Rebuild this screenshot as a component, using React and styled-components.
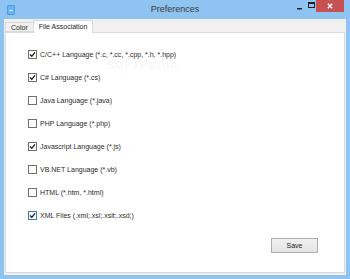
import React from 'react'
import styled, { createGlobalStyle } from 'styled-components'

const GlobalStyle = createGlobalStyle`
  html, body {
    margin: 0;
    padding: 0;
    overflow: hidden;
    background: #8fc4f2;
  }
`

const Window = styled.div`
  width: 350px;
  height: 279px;
  background: #8fc4f2;
  display: flex;
  flex-direction: column;
  font-family: 'Liberation Sans', Arial, sans-serif;
  color: #2b2b2b;
  box-sizing: border-box;
`

const TitleBar = styled.div`
  height: 19px;
  display: flex;
  align-items: flex-start;
  position: relative;
  flex-shrink: 0;
`

const AppIcon = styled.svg`
  margin: 5px 0 0 7px;
`

const Title = styled.div`
  position: absolute;
  left: 0;
  right: 0;
  top: 4px;
  text-align: center;
  font-size: 9px;
  color: #3a3a3a;
`

const Controls = styled.div`
  margin-left: auto;
  margin-right: 6px;
  display: flex;
  align-items: flex-start;
  position: relative;
  z-index: 1;
`

const CtrlButton = styled.div`
  width: ${p => p.$w}px;
  height: 12px;
  display: flex;
  align-items: center;
  justify-content: center;
  background: ${p => (p.$close ? '#c75050' : 'transparent')};
`

const Client = styled.div`
  flex: 1;
  margin: 0 4px 4px 4px;
  background: #f0f0f0;
  display: flex;
  flex-direction: column;
  padding: 1px 1px 2px 1px;
`

const TabRow = styled.div`
  display: flex;
  align-items: flex-end;
  height: 12px;
  position: relative;
  z-index: 1;
`

const Tab = styled.div`
  font-size: 7px;
  box-sizing: border-box;
  border: 1px solid #d9d9d9;
  border-bottom: ${p => (p.$active ? 'none' : '1px solid #d9d9d9')};
  background: ${p => (p.$active ? '#ffffff' : '#f0f0f0')};
  height: ${p => (p.$active ? 13 : 10)}px;
  margin-bottom: ${p => (p.$active ? -1 : 0)}px;
  padding: ${p => (p.$active ? '2px 5px 0 5px' : '1px 5px 0 5px')};
  margin-left: ${p => (p.$active ? -1 : 0)}px;
  color: #1e1e1e;
  line-height: 8px;
`

const Panel = styled.div`
  flex: 1;
  background: #ffffff;
  border: 1px solid #d9d9d9;
  display: flex;
  flex-direction: column;
  position: relative;
  padding: 17px 0 0 22px;
`

const List = styled.div`
  display: flex;
  flex-direction: column;
  gap: 14px;
`

const Row = styled.label`
  display: flex;
  align-items: center;
  gap: 3px;
  height: 9px;
  font-size: 7px;
  color: #2b2b2b;
`

const Box = styled.span`
  width: 9px;
  height: 9px;
  box-sizing: border-box;
  border: 1px solid ${p => (p.$focus ? '#3c7fb1' : '#707070')};
  background: #ffffff;
  display: flex;
  align-items: center;
  justify-content: center;
`

const Footer = styled.div`
  margin-top: auto;
  display: flex;
  justify-content: flex-end;
  padding: 0 26px 19px 0;
`

const Button = styled.button`
  width: 47px;
  height: 15px;
  font-family: 'Liberation Sans', Arial, sans-serif;
  font-size: 7px;
  color: #1e1e1e;
  background: linear-gradient(#f0f0f0, #e5e5e5);
  border: 1px solid #adadad;
  padding: 0;
`

const Watermark = styled.div`
  position: absolute;
  left: 101px;
  top: 27px;
  font-size: 11px;
  letter-spacing: 1px;
  font-weight: bold;
  color: rgba(0, 0, 0, 0.05);
  line-height: 10px;
  text-align: center;

  small {
    display: block;
    font-size: 6px;
    font-weight: normal;
    letter-spacing: 0;
  }
`

const items = [
  { label: 'C/C++ Language (*.c, *.cc, *.cpp, *.h, *.hpp)', checked: true },
  { label: 'C# Language (*.cs)', checked: true },
  { label: 'Java Language (*.java)', checked: false },
  { label: 'PHP Language (*.php)', checked: false },
  { label: 'Javascript Language (*.js)', checked: true },
  { label: 'VB.NET Language (*.vb)', checked: false },
  { label: 'HTML (*.htm, *.html)', checked: false },
  { label: 'XML Files (.xml;.xsl;.xslt;.xsd;)', checked: true, focus: true }
]

const Check = () => (
  <svg width="7" height="7" viewBox="0 0 7 7">
    <path d="M1 3.5 L2.8 5.3 L6 1.3" fill="none" stroke="#1a1a1a" strokeWidth="1.3" />
  </svg>
)

export default function App () {
  return (
    <Window>
      <GlobalStyle />
      <TitleBar>
        <AppIcon width="8" height="10" viewBox="0 0 8 10">
          <rect x="0" y="0" width="8" height="10" rx="1.5" fill="#4a9be8" />
          <rect x="1" y="1" width="6" height="8" rx="1" fill="#6fb4f0" />
          <rect x="2" y="5" width="4" height="1" fill="#d7ecfc" />
        </AppIcon>
        <Title>Preferences</Title>
        <Controls>
          <CtrlButton $w={13}>
            <svg width="5" height="2" viewBox="0 0 5 2" style={{ marginTop: 5 }}>
              <rect width="5" height="1.5" fill="#222" />
            </svg>
          </CtrlButton>
          <CtrlButton $w={10}>
            <svg width="7" height="6" viewBox="0 0 7 6" style={{ marginTop: -3 }}>
              <rect x="0.5" y="0.5" width="6" height="5" fill="none" stroke="#222" />
              <rect x="0.5" y="0.5" width="6" height="1.5" fill="#222" />
            </svg>
          </CtrlButton>
          <CtrlButton $w={28} $close>
            <svg width="6" height="6" viewBox="0 0 6 6">
              <path d="M0.8 0.8 L5.2 5.2 M5.2 0.8 L0.8 5.2" stroke="#fff" strokeWidth="1.4" />
            </svg>
          </CtrlButton>
        </Controls>
      </TitleBar>
      <Client>
        <TabRow>
          <Tab>Color</Tab>
          <Tab $active>File Association</Tab>
        </TabRow>
        <Panel>
          <Watermark>
            SOFTPEDIA
            <small>www.softpedia.com</small>
          </Watermark>
          <List>
            {items.map(item => (
              <Row key={item.label}>
                <Box $focus={item.focus}>{item.checked && <Check />}</Box>
                {item.label}
              </Row>
            ))}
          </List>
          <Footer>
            <Button>Save</Button>
          </Footer>
        </Panel>
      </Client>
    </Window>
  )
}
